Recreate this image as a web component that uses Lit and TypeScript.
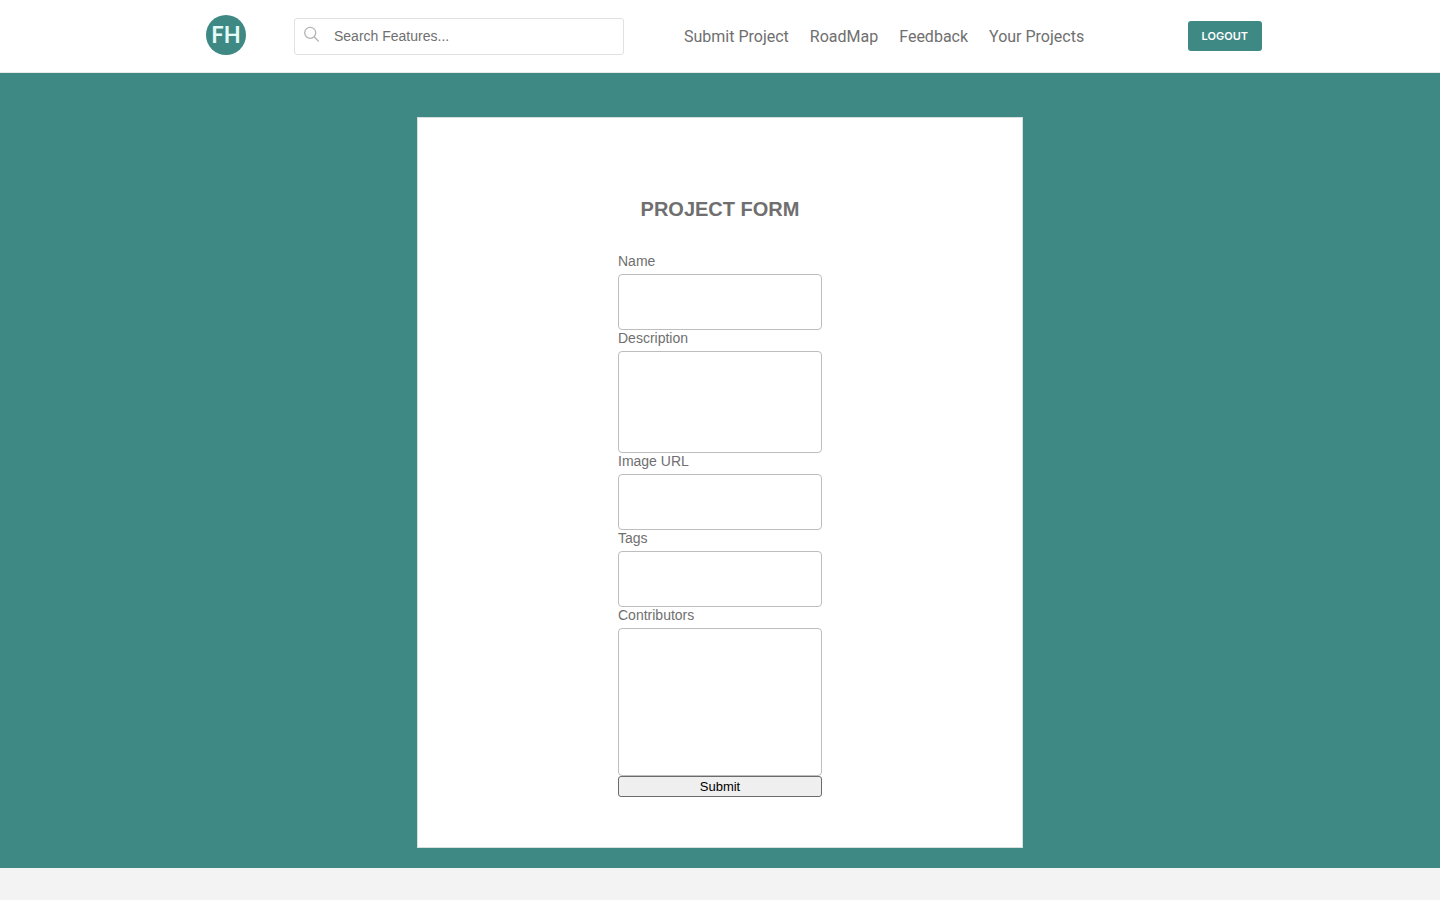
import { LitElement, html, css } from "lit";
import { customElement } from "lit/decorators.js";

interface Field {
  id: string;
  label: string;
  size: "line" | "medium" | "large";
}

const LINKS = ["Submit Project", "RoadMap", "Feedback", "Your Projects"];

const FIELDS: Field[] = [
  { id: "name", label: "Name", size: "line" },
  { id: "description", label: "Description", size: "medium" },
  { id: "image-url", label: "Image URL", size: "line" },
  { id: "tags", label: "Tags", size: "line" },
  { id: "contributors", label: "Contributors", size: "large" },
];

@customElement("site-header")
class SiteHeader extends LitElement {
  static styles = css`
    :host {
      display: block;
      padding: 0 20px 0 48px;
      background: #fff;
      border-bottom: 1px solid #e8e8e8;
    }
    .bar {
      display: flex;
      align-items: center;
      max-width: 1056px;
      min-height: 72px;
      margin: 0 auto;
    }
    .logo {
      display: flex;
      flex: none;
      padding-bottom: 2px;
    }
    .search {
      box-sizing: border-box;
      display: flex;
      align-items: center;
      flex: 0 1 330px;
      height: 37px;
      margin-left: 48px;
      padding-left: 9px;
      border: 1px solid #e1e1e1;
      border-radius: 3px;
    }
    .search svg {
      flex: none;
      margin-bottom: 4px;
    }
    .search input {
      flex: 1;
      min-width: 0;
      padding: 0;
      margin-left: 14px;
      border: 0;
      outline: 0;
      background: none;
      font: 14px "Liberation Sans", Arial, sans-serif;
      color: #6f6f6f;
    }
    .search input::placeholder {
      color: #6f6f6f;
      opacity: 1;
    }
    nav {
      display: flex;
      gap: 21px;
      margin-left: 60px;
      padding-top: 2px;
    }
    nav a {
      font: 16px/24px Roboto, sans-serif;
      color: #6f6f6f;
      text-decoration: none;
      white-space: nowrap;
    }
    .logout {
      height: 30px;
      margin-left: auto;
      padding: 0 14px;
      border: 0;
      border-radius: 3px;
      background: #3f8985;
      color: #fff;
      font: 600 11px Inter, sans-serif;
      text-transform: uppercase;
    }
  `;

  render() {
    return html`
      <header class="bar">
        <a class="logo" href="#" aria-label="FH home">
          <svg width="40" height="40" viewBox="0 0 40 40">
            <circle cx="20" cy="20" r="20" fill="#3f8985" />
            <text
              x="20"
              y="28"
              text-anchor="middle"
              font-family="Lato, sans-serif"
              font-size="22"
              font-weight="700"
              fill="#e4fbf7"
            >FH</text>
          </svg>
        </a>
        <label class="search">
          <svg width="16" height="16" viewBox="0 0 16 16" fill="none" stroke="#b4b4b4" stroke-width="1.3">
            <circle cx="6.2" cy="6.8" r="5.5" />
            <path d="M10.1 10.8 14.8 15.5" />
          </svg>
          <input type="search" aria-label="Search Features" placeholder="Search Features..." />
        </label>
        <nav>${LINKS.map((text) => html`<a href="#">${text}</a>`)}</nav>
        <button class="logout" type="button">Logout</button>
      </header>
    `;
  }
}

@customElement("project-form")
class ProjectForm extends LitElement {
  static styles = css`
    :host {
      box-sizing: border-box;
      display: block;
      width: 100%;
      max-width: 606px;
      padding: 79px 20px 50px;
      border: 1px solid #d5e0df;
      background: #fff;
      font-family: "Liberation Sans", Arial, sans-serif;
      color: #6f6f6f;
    }
    h2 {
      margin: 0 0 32px;
      font-size: 20px;
      line-height: 24px;
      font-weight: 700;
      text-align: center;
      text-transform: uppercase;
    }
    form {
      display: flex;
      flex-direction: column;
      width: 204px;
      margin: 0 auto;
    }
    label {
      margin-bottom: 4px;
      font-size: 14px;
      line-height: 17px;
    }
    .field {
      box-sizing: border-box;
      width: 100%;
      margin: 0;
      padding: 8px;
      border: 1px solid #bdbdbd;
      border-radius: 4px;
      background: #fff;
      font: inherit;
      font-size: 14px;
      resize: none;
    }
    .line {
      height: 56px;
    }
    .medium {
      height: 102px;
    }
    .large {
      height: 148px;
    }
    .submit {
      height: 21px;
      padding: 0;
      border: 1px solid #6b6b6b;
      border-radius: 3px;
      background: #efefef;
      color: #000;
      font: 13px "Liberation Sans", Arial, sans-serif;
    }
  `;

  private control(field: Field) {
    return field.size === "line"
      ? html`<input class="field line" id=${field.id} type="text" />`
      : html`<textarea class="field ${field.size}" id=${field.id}></textarea>`;
  }

  render() {
    return html`
      <h2>Project Form</h2>
      <form>
        ${FIELDS.map((field) => html`<label for=${field.id}>${field.label}</label>${this.control(field)}`)}
        <button class="submit" type="submit">Submit</button>
      </form>
    `;
  }
}

@customElement("app-root")
class AppRoot extends LitElement {
  static styles = css`
    :host {
      display: block;
      min-height: 100vh;
      background: #f3f3f3;
    }
    main {
      display: flex;
      justify-content: center;
      padding: 44px 20px 20px;
      background: #3f8985;
    }
  `;

  render() {
    return html`
      <site-header></site-header>
      <main><project-form></project-form></main>
    `;
  }
}
